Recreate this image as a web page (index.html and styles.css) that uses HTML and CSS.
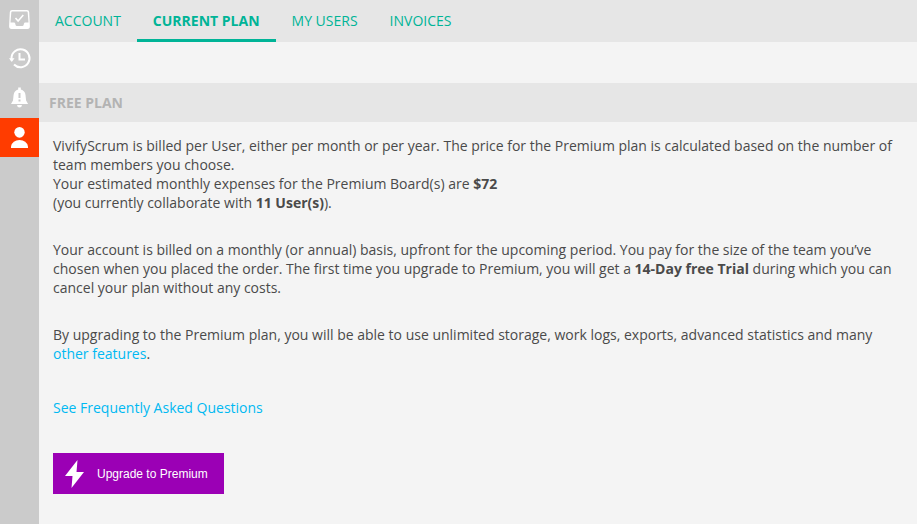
FILE: index.html
```
<!doctype html>
<html lang="en">
<head>
<meta charset="utf-8">
<title>Current plan</title>
<link rel="stylesheet" href="styles.css">
</head>

<body>
<div class="app">
  <nav class="sidebar" aria-label="Main">
    <a class="side-item" href="#tasks" aria-label="Tasks">
      <svg width="39" height="39" viewBox="0 0 39 39">
        <path fill="#fff" fill-rule="evenodd" d="M12 9h15q2 0 2.200 1.900l.7 14.200q.1 2.900-2.400 2.900h-16q-2.500 0-2.400-2.900l.7-14.200Q10 9 12 9zm.2 1.500q-.8 0-.9.900L10.500 21.500h3.500q1 0 1.200 1l.3 1.200q.2 1.300 1.500 1.300h5.200q1.300 0 1.500-1.300l.3-1.200q.2-1 1.200-1h3.300L27.700 11.400q-.1-.9-.9-.9z"/>
        <path d="M15.500 17l2.600 3 5.200-6" fill="none" stroke="#fff" stroke-width="1.600"/>
      </svg>
    </a>
    <a class="side-item" href="#history" aria-label="History">
      <svg width="39" height="39" viewBox="0 0 39 39">
        <path d="M11.500 20.500v-2a9 9 0 1 1 2.500 6" fill="none" stroke="#fff" stroke-width="2"/>
        <path d="M9 18.200h5.500L11.800 22z" fill="#fff"/>
        <path d="M19.500 13v6.500H25" fill="none" stroke="#fff" stroke-width="2"/>
      </svg>
    </a>
    <a class="side-item" href="#alerts" aria-label="Alerts">
      <svg width="39" height="39" viewBox="0 0 39 39">
        <path fill="#fff" d="M18.200 8.500h2.600v2q4.200 1 4.700 5.500l.6 5.500 2 3.500H11l2-3.500.6-5.500q.5-4.500 4.600-5.500zM17 26h5q-.3 2.500-2.500 2.500T17 26z"/>
        <path d="M19.500 14v5M19.500 20.500v2" stroke="#cbcbcb" stroke-width="2"/>
      </svg>
    </a>
    <a class="side-item active" href="#profile" aria-label="Profile">
      <svg width="39" height="39" viewBox="0 0 39 39">
        <ellipse cx="19.500" cy="14.300" rx="5.200" ry="5.400" fill="#fff"/>
        <path fill="#fff" d="M11 30v-1.500q1.500-6.500 8.500-6.500t8.500 6.500V30z"/>
      </svg>
    </a>
  </nav>

  <main class="main">
    <nav class="tabs" aria-label="Profile sections">
      <a class="tab" href="#account">ACCOUNT</a>
      <a class="tab active" href="#plan" aria-current="page">CURRENT PLAN</a>
      <a class="tab" href="#users">MY USERS</a>
      <a class="tab" href="#invoices">INVOICES</a>
    </nav>

    <h1 class="plan-title">FREE PLAN</h1>

    <div class="content">
      <p>VivifyScrum is billed per User, either per month or per year. The price for the Premium plan is calculated based on the number of team members you choose.<br>
      Your estimated monthly expenses for the Premium Board(s) are <b>$72</b><br>
      (you currently collaborate with <b>11 User(s)</b>).</p>

      <p>Your account is billed on a monthly (or annual) basis, upfront for the upcoming period. You pay for the size of the team you’ve chosen when you placed the order. The first time you upgrade to Premium, you will get a <b>14-Day free Trial</b> during which you can cancel your plan without any costs.</p>

      <p>By upgrading to the Premium plan, you will be able to use unlimited storage, work logs, exports, advanced statistics and many <a href="#features">other features</a>.</p>

      <p class="faq"><a href="#faq">See Frequently Asked Questions</a></p>

      <button class="upgrade" type="button">
        <svg width="20" height="28" viewBox="0 0 20 28">
          <path fill="#fff" d="M12.500 0L0 16h7.500L6.500 28 19 12h-7.500z"/>
        </svg>
        Upgrade to Premium
      </button>
    </div>
  </main>
</div>
</body>
</html>
```

FILE: styles.css
```
* {
	box-sizing: border-box;
}
body {
	margin: 0;
	background-color: #f4f4f4;
	color: #4a4a4a;
	font: 14px/19px "Open Sans", "Noto Sans", sans-serif;
}
a {
	color: #00b9f2;
	text-decoration: none;
}
.app {
	display: flex;
	min-height: 100vh;
}
.sidebar {
	flex: none;
	width: 39px;
	padding-top: 1px;
	background-color: #cbcbcb;
}
.side-item {
	display: block;
	height: 39px;
}
.side-item svg {
	display: block;
}
.side-item.active {
	background-color: #ff3c00;
}
.main {
	flex: 1;
	min-width: 0;
}
.tabs {
	display: flex;
	background-color: #e6e6e6;
}
.tab {
	padding: 11px 16px 9px;
	border-bottom: 3px solid transparent;
	color: #00b497;
}
.tab.active {
	border-bottom-color: #00b497;
	font-weight: bold;
}
.plan-title {
	margin: 41px 0 0;
	padding: 10px;
	background-color: #e6e6e6;
	color: #b3b3b3;
	font-size: 14px;
	line-height: 19px;
}
.content {
	padding: 14px;
}
.content p {
	margin: 0 0 28px;
}
.content .faq {
	margin: 35px 0 36px;
}
.upgrade {
	display: flex;
	align-items: center;
	gap: 12px;
	height: 41px;
	padding: 0 16px 0 12px;
	border: 0;
	background-color: #9b00b5;
	color: #fff;
	font: 12px "Liberation Sans", Arial, sans-serif;
	cursor: pointer;
}
```
